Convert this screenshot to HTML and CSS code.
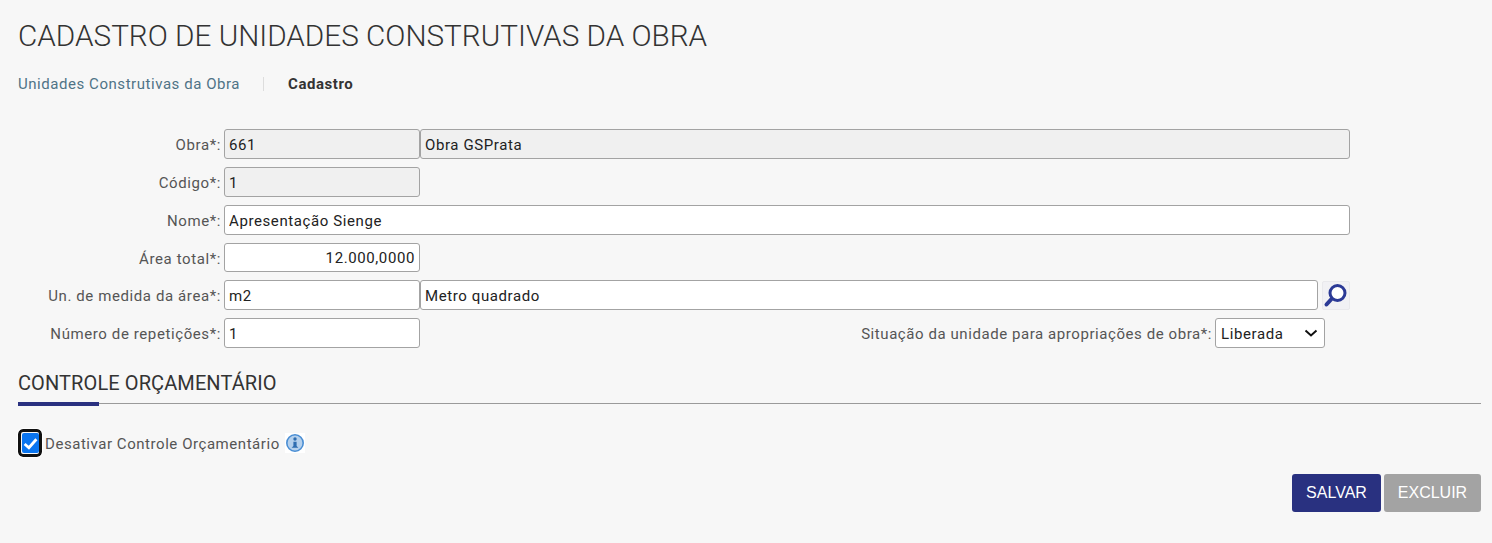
FILE: index.html
```html
<!DOCTYPE html>
<html lang="pt-BR">
<head>
    <meta charset="UTF-8">
    <title>Cadastro de Unidades Construtivas da Obra</title>
    <link rel="stylesheet" href="styles.css">
</head>
<body>
<div class="main">
    <h1 class="title">CADASTRO DE UNIDADES CONSTRUTIVAS DA OBRA</h1>
    <div class="crumbs">
        <a class="crumbLink" href="#">Unidades Construtivas da Obra</a>
        <span class="crumbSep"></span>
        <b class="crumbNow">Cadastro</b>
    </div>
    <form class="form">
        <div class="row">
            <label class="lbl">Obra*:</label>
            <input class="ipt short" type="text" value="661" disabled>
            <input class="ipt grow" type="text" value="Obra GSPrata" disabled>
        </div>
        <div class="row">
            <label class="lbl">Código*:</label>
            <input class="ipt short" type="text" value="1" disabled>
        </div>
        <div class="row">
            <label class="lbl">Nome*:</label>
            <input class="ipt grow" type="text" value="Apresentação Sienge">
        </div>
        <div class="row rowArea">
            <label class="lbl">Área total*:</label>
            <input class="ipt short num" type="text" value="12.000,0000">
        </div>
        <div class="row">
            <label class="lbl">Un. de medida da área*:</label>
            <input class="ipt short" type="text" value="m2">
            <input class="ipt grow" type="text" value="Metro quadrado">
            <span class="lupa">
                <svg width="26" height="26" viewBox="0 0 26 26">
                    <circle cx="14.5" cy="11" r="7.5" fill="#fff" stroke="#2b3a96" stroke-width="3"/>
                    <path d="M8.5 17 L3.5 22.5" stroke="#2b3a96" stroke-width="4" stroke-linecap="round"/>
                </svg>
            </span>
        </div>
        <div class="row">
            <label class="lbl">Número de repetições*:</label>
            <input class="ipt short" type="text" value="1">
            <label class="lblSit">Situação da unidade para apropriações de obra*:</label>
            <select class="sel">
                <option>Liberada</option>
            </select>
        </div>
    </form>
    <h2 class="secTitle">CONTROLE ORÇAMENTÁRIO</h2>
    <div class="check">
        <span class="checkRing">
            <span class="checkBox">
                <svg width="15" height="15" viewBox="0 0 14 14">
                    <path d="M1.5 7.5 L5.5 11 L12.5 3" fill="none" stroke="#fff" stroke-width="2.6"/>
                </svg>
            </span>
        </span>
        <span class="checkTxt">Desativar Controle Orçamentário</span>
        <span class="info">
            <svg width="20" height="20" viewBox="0 0 20 20">
                <circle cx="10" cy="10" r="8.2" fill="#b5d0ec" stroke="#4a8ed4" stroke-width="1.6"/>
                <circle cx="10" cy="6" r="1.7" fill="#2f6db0"/>
                <path d="M8.4 8.8 H11.6 V13 L13.4 14.8 H6.6 L8.4 13 Z" fill="#2f6db0"/>
            </svg>
        </span>
    </div>
    <div class="btns">
        <button class="btn save" type="button">SALVAR</button>
        <button class="btn off" type="button">EXCLUIR</button>
    </div>
</div>
</body>
</html>
```

FILE: styles.css
```css
*{
    margin: 0;
    padding: 0;
    box-sizing: border-box;
}
html,body{
    width: 100%;
    height: 100%;
}
body{
    background: #f7f7f7;
    font-family: Roboto, "Liberation Sans", sans-serif;
    font-size: 15px;
    letter-spacing: 0.55px;
    color: #4c4c4c;
    overflow: hidden;
}
.main{
    padding: 18px 11px 0 18px;
}
.title{
    height: 37px;
    font-size: 29.7px;
    font-weight: 300;
    line-height: 36px;
    letter-spacing: 0;
    color: #333;
}
.crumbs{
    display: flex;
    align-items: center;
    height: 20px;
    margin-top: 19px;
}
.crumbLink{
    color: #4f7386;
    text-decoration: none;
}
.crumbSep{
    width: 1px;
    height: 14px;
    margin: 0 24px 0 23px;
    background: #ddd;
}
.crumbNow{
    font-weight: 700;
    color: #333;
}
.form{
    display: flex;
    flex-direction: column;
    gap: 8px;
    width: 1332px;
    margin-top: 35px;
}
.row{
    display: flex;
    align-items: center;
    height: 30px;
}
.rowArea{
    height: 29px;
}
.rowArea .ipt{
    height: 29px;
}
.lbl{
    flex: none;
    width: 203px;
    margin-right: 3px;
    padding-top: 2px;
    text-align: right;
    letter-spacing: 0.6px;
    color: #555;
}
.ipt{
    height: 30px;
    padding: 1px 4px 0;
    border: 1px solid #a3a3a3;
    border-radius: 3px;
    background: #fff;
    font-family: Roboto, "Liberation Sans", sans-serif;
    font-size: 15px;
    letter-spacing: 0.6px;
    color: #222;
}
.ipt:disabled{
    background: #f0f0f0;
    color: #222;
    opacity: 1;
}
.short{
    flex: none;
    width: 196px;
}
.grow{
    flex: 1;
    min-width: 0;
}
.num{
    text-align: right;
}
.lupa{
    flex: none;
    display: flex;
    align-items: center;
    justify-content: center;
    width: 28px;
    height: 29px;
    margin-left: 4px;
    background: #f1f1f4;
    border: 1px solid #e9e9ec;
    border-radius: 2px;
}
.lblSit{
    flex: 1;
    margin-right: 3px;
    padding-top: 2px;
    text-align: right;
    letter-spacing: 0.57px;
    color: #555;
}
.sel{
    flex: none;
    width: 110px;
    height: 30px;
    margin-right: 25px;
    padding: 0 0 0 5px;
    border: 1px solid #a3a3a3;
    border-radius: 3px;
    appearance: none;
    background: #fff url("data:image/svg+xml,%3Csvg xmlns='http://www.w3.org/2000/svg' width='14' height='8' viewBox='0 0 14 8'%3E%3Cpath d='M1.5 1.5 L7 6.5 L12.5 1.5' fill='none' stroke='%23111' stroke-width='2'/%3E%3C/svg%3E") no-repeat right 6px center;
    font-family: Roboto, "Liberation Sans", sans-serif;
    font-size: 15px;
    letter-spacing: 0.6px;
    line-height: 30px;
    color: #222;
}
.secTitle{
    position: relative;
    height: 31px;
    margin-top: 25px;
    border-bottom: 1px solid #9a9a9a;
    font-size: 20px;
    font-weight: 400;
    line-height: 20px;
    letter-spacing: 0.1px;
    color: #333;
}
.secTitle::after{
    content: "";
    position: absolute;
    left: 0;
    bottom: -3px;
    width: 81px;
    height: 4px;
    background: #2a3180;
}
.check{
    display: flex;
    align-items: center;
    height: 28px;
    margin-top: 25px;
}
.checkRing{
    display: flex;
    flex: none;
    align-items: center;
    justify-content: center;
    width: 24px;
    height: 28px;
    border: 3px solid #111;
    border-radius: 5px;
    outline: 1px solid #fff;
}
.checkBox{
    display: flex;
    align-items: center;
    justify-content: center;
    width: 17px;
    height: 20px;
    background: #0a75f0;
    border-radius: 2px;
}
.checkTxt{
    margin-left: 3px;
    padding-top: 1px;
    color: #555;
}
.info{
    display: flex;
    margin-left: 5px;
    background: #fff;
}
.btns{
    display: flex;
    justify-content: flex-end;
    gap: 3px;
    margin-top: 17px;
}
.btn{
    height: 38px;
    border: none;
    border-radius: 3px;
    font-family: "Liberation Sans", Arial, sans-serif;
    font-size: 16px;
    color: #fff;
}
.save{
    width: 89px;
    background: #293180;
}
.off{
    width: 97px;
    background: #a3a3a3;
}
```
